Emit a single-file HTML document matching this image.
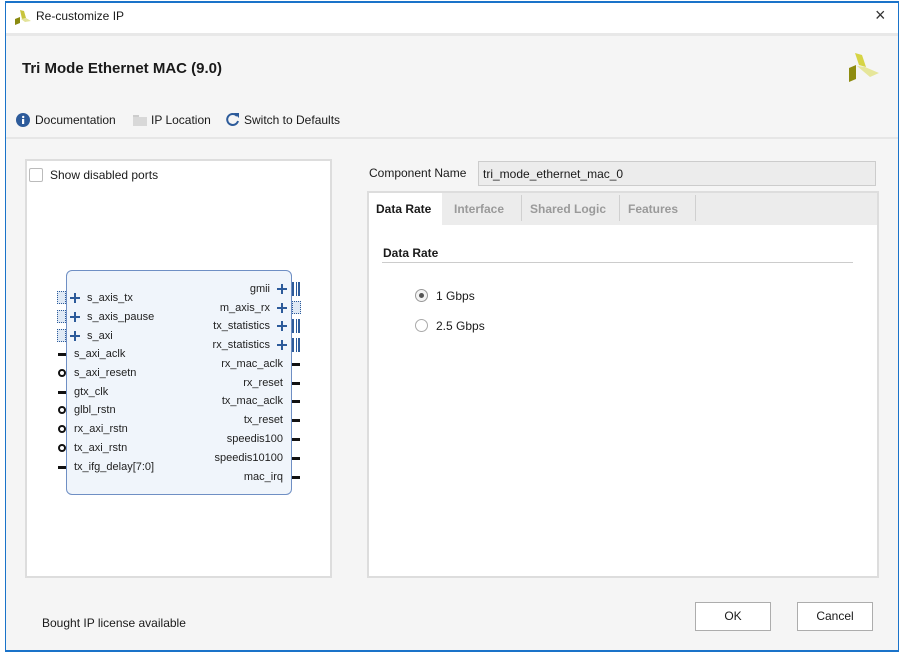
<!DOCTYPE html>
<html><head><meta charset="utf-8"><style>
*{box-sizing:border-box;margin:0;padding:0}
body{width:904px;height:656px;background:#fff;position:relative;overflow:hidden;font-family:"Liberation Sans",sans-serif;font-size:12px;color:#1a1a1a}
.a{position:absolute;white-space:nowrap}
.pl{position:absolute;font-size:11px;color:#222;line-height:12px}
.plus{position:absolute;width:10px;height:10px}
.plus:before{content:"";position:absolute;left:0;top:4px;width:10px;height:2px;background:#2d5b9a}
.plus:after{content:"";position:absolute;left:4px;top:0;width:2px;height:10px;background:#2d5b9a}
.pin{position:absolute;height:3px;width:8px;background:#111}
.bub{position:absolute;width:8px;height:8px;border:2px solid #111;border-radius:50%;background:#fff}
.bus{position:absolute;width:8px;height:14px;border-left:2px solid #2d5b9a;border-right:2px solid #2d5b9a}
.bus:after{content:"";position:absolute;left:2px;top:0;width:1px;height:14px;background:#2d5b9a}
.bbox{position:absolute;width:9px;height:13px;border:1px dotted #2d5b9a;background:#dfe9f5}
</style></head><body>
<div class="a" style="left:5px;top:1px;width:894px;height:651px;border:1px solid #1a73c9;border-width:2px 1px 2px 1px;background:#f5f5f5"></div>
<div class="a" style="left:6px;top:3px;width:892px;height:30px;background:#fff"></div>
<div class="a" style="left:6px;top:33px;width:892px;height:3px;background:#e8e8e8"></div>
<svg class="a" style="left:13px;top:8px" width="20" height="18"><polygon points="7,2 11,3 13,10 9,11" fill="#c8c43c"/><polygon points="2,11 7,9 7,15 2,17" fill="#8a8a10"/><polygon points="8,11 13,10 18,13 12,14" fill="#e3e39a"/></svg>
<div class="a" style="left:36px;top:9px;font-size:12px">Re-customize IP</div>
<div class="a" style="left:875px;top:5px;font-size:18px;color:#333">×</div>
<div class="a" style="left:22px;top:60px;font-size:15px;font-weight:bold">Tri Mode Ethernet MAC (9.0)</div>
<svg class="a" style="left:848px;top:50px" width="34" height="34"><polygon points="7,3 14,5 18,17 11,15" fill="#d6d445"/><polygon points="1,18 8,15 8,29 1,32" fill="#8e8c10"/><polygon points="9,16 17,17 31,23 22,27" fill="#e6e69a"/></svg>
<svg class="a" style="left:16px;top:113px" width="14" height="14"><circle cx="7" cy="7" r="7" fill="#2d5b9a"/><rect x="6" y="6" width="2.2" height="5" fill="#fff"/><circle cx="7.2" cy="4" r="1.2" fill="#fff"/></svg>
<div class="a" style="left:35px;top:113px">Documentation</div>
<svg class="a" style="left:133px;top:114px" width="14" height="12"><rect x="0" y="1" width="6" height="3" fill="#ccc"/><rect x="0" y="3" width="14" height="9" fill="#d8d8d8"/></svg>
<div class="a" style="left:151px;top:113px">IP Location</div>
<svg class="a" style="left:225px;top:112px" width="15" height="15"><path d="M12 4 A5.5 5.5 0 1 0 13 9" fill="none" stroke="#2d5b9a" stroke-width="2"/><polygon points="9,1 14,1 14,6" fill="#2d5b9a"/></svg>
<div class="a" style="left:244px;top:113px">Switch to Defaults</div>
<div class="a" style="left:6px;top:137px;width:892px;height:2px;background:#e6e6e6"></div>
<div class="a" style="left:25px;top:159px;width:307px;height:419px;background:#fff;border:2px solid #ddd"></div>
<div class="a" style="left:29px;top:168px;width:14px;height:14px;border:1px solid #bbb;border-radius:2px;background:#fff"></div>
<div class="a" style="left:50px;top:168px">Show disabled ports</div>
<div class="a" style="left:66px;top:270px;width:226px;height:225px;border:1px solid #6f8fc4;border-radius:6px;background:#f0f5fb"></div>
<div class="bbox" style="left:57px;top:291px"></div><div class="plus" style="left:70px;top:293px"></div><div class="pl" style="left:87px;top:292px">s_axis_tx</div>
<div class="bbox" style="left:57px;top:310px"></div><div class="plus" style="left:70px;top:312px"></div><div class="pl" style="left:87px;top:311px">s_axis_pause</div>
<div class="bbox" style="left:57px;top:329px"></div><div class="plus" style="left:70px;top:331px"></div><div class="pl" style="left:87px;top:330px">s_axi</div>
<div class="pin" style="left:58px;top:353px"></div><div class="pl" style="left:74px;top:348px">s_axi_aclk</div>
<div class="bub" style="left:58px;top:369px"></div><div class="pl" style="left:74px;top:367px">s_axi_resetn</div>
<div class="pin" style="left:58px;top:391px"></div><div class="pl" style="left:74px;top:386px">gtx_clk</div>
<div class="bub" style="left:58px;top:406px"></div><div class="pl" style="left:74px;top:404px">glbl_rstn</div>
<div class="bub" style="left:58px;top:425px"></div><div class="pl" style="left:74px;top:423px">rx_axi_rstn</div>
<div class="bub" style="left:58px;top:444px"></div><div class="pl" style="left:74px;top:442px">tx_axi_rstn</div>
<div class="pin" style="left:58px;top:466px"></div><div class="pl" style="left:74px;top:461px">tx_ifg_delay[7:0]</div>
<div class="pl" style="right:634px;top:283px">gmii</div><div class="plus" style="left:277px;top:284px"></div><div class="bus" style="left:292px;top:282px"></div>
<div class="pl" style="right:634px;top:302px">m_axis_rx</div><div class="plus" style="left:277px;top:303px"></div><div class="bbox" style="left:292px;top:301px"></div>
<div class="pl" style="right:634px;top:320px">tx_statistics</div><div class="plus" style="left:277px;top:321px"></div><div class="bus" style="left:292px;top:319px"></div>
<div class="pl" style="right:634px;top:339px">rx_statistics</div><div class="plus" style="left:277px;top:340px"></div><div class="bus" style="left:292px;top:338px"></div>
<div class="pl" style="right:621px;top:358px">rx_mac_aclk</div><div class="pin" style="left:292px;top:363px"></div>
<div class="pl" style="right:621px;top:377px">rx_reset</div><div class="pin" style="left:292px;top:382px"></div>
<div class="pl" style="right:621px;top:395px">tx_mac_aclk</div><div class="pin" style="left:292px;top:400px"></div>
<div class="pl" style="right:621px;top:414px">tx_reset</div><div class="pin" style="left:292px;top:419px"></div>
<div class="pl" style="right:621px;top:433px">speedis100</div><div class="pin" style="left:292px;top:438px"></div>
<div class="pl" style="right:621px;top:452px">speedis10100</div><div class="pin" style="left:292px;top:457px"></div>
<div class="pl" style="right:621px;top:471px">mac_irq</div><div class="pin" style="left:292px;top:476px"></div>
<div class="a" style="left:369px;top:166px">Component Name</div>
<div class="a" style="left:478px;top:161px;width:398px;height:25px;background:#ececec;border:1px solid #ccc;padding:5px 4px">tri_mode_ethernet_mac_0</div>
<div class="a" style="left:367px;top:191px;width:512px;height:387px;background:#fff;border:2px solid #ddd"></div>
<div class="a" style="left:369px;top:193px;width:508px;height:32px;background:#ececec"></div>
<div class="a" style="left:369px;top:193px;width:73px;height:32px;background:#fff"></div>
<div class="a" style="left:376px;top:202px;font-weight:bold">Data Rate</div>
<div class="a" style="left:454px;top:202px;font-weight:bold;color:#9a9a9a">Interface</div>
<div class="a" style="left:521px;top:195px;width:1px;height:26px;background:#d0d0d0"></div>
<div class="a" style="left:530px;top:202px;font-weight:bold;color:#9a9a9a">Shared Logic</div>
<div class="a" style="left:619px;top:195px;width:1px;height:26px;background:#d0d0d0"></div>
<div class="a" style="left:628px;top:202px;font-weight:bold;color:#9a9a9a">Features</div>
<div class="a" style="left:695px;top:195px;width:1px;height:26px;background:#d0d0d0"></div>
<div class="a" style="left:383px;top:246px;font-weight:bold">Data Rate</div>
<div class="a" style="left:382px;top:262px;width:471px;height:1px;background:#ccc"></div>
<div class="a" style="left:415px;top:289px;width:13px;height:13px;border:1px solid #999;border-radius:50%;background:#f4f4f4"></div>
<div class="a" style="left:419px;top:293px;width:5px;height:5px;border-radius:50%;background:#555"></div>
<div class="a" style="left:436px;top:289px">1 Gbps</div>
<div class="a" style="left:415px;top:319px;width:13px;height:13px;border:1px solid #aaa;border-radius:50%;background:#fff"></div>
<div class="a" style="left:436px;top:319px">2.5 Gbps</div>
<div class="a" style="left:42px;top:616px">Bought IP license available</div>
<div class="a" style="left:695px;top:602px;width:76px;height:29px;border:1px solid #adadad;background:#fff;text-align:center;line-height:27px">OK</div>
<div class="a" style="left:797px;top:602px;width:76px;height:29px;border:1px solid #adadad;background:#fff;text-align:center;line-height:27px">Cancel</div>
</body></html>
